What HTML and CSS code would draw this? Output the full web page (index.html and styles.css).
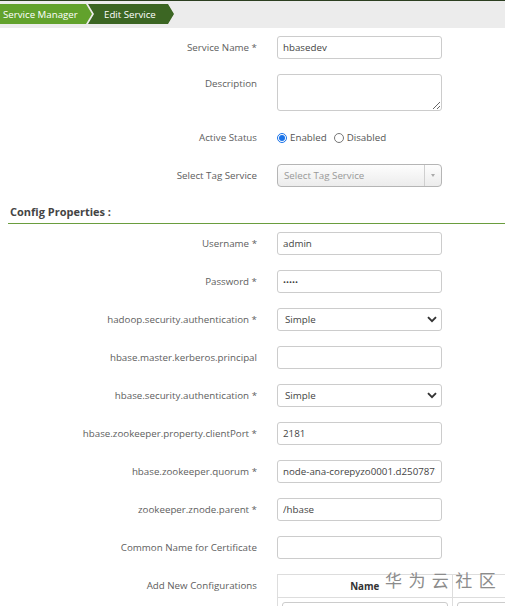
FILE: index.html
```html
<!DOCTYPE html>
<html lang="en">
<head>
<meta charset="utf-8">
<title>Edit Service</title>
<link rel="stylesheet" href="styles.css">
</head>
<body>
<div class="topbar">
  <a class="crumb crumb-first">Service Manager</a>
  <a class="crumb crumb-last">Edit Service</a>
</div>

<form class="form">
  <div class="row">
    <label class="lbl">Service Name *</label>
    <input class="field" type="text" value="hbasedev">
  </div>
  <div class="row">
    <label class="lbl lbl-area">Description</label>
    <textarea class="field area"></textarea>
  </div>
  <div class="row">
    <label class="lbl">Active Status</label>
    <div class="radios">
      <span class="radio-opt"><input type="radio" name="st" checked> Enabled</span>
      <span class="radio-opt"><input type="radio" name="st"> Disabled</span>
    </div>
  </div>
  <div class="row">
    <label class="lbl">Select Tag Service</label>
    <div class="select2">
      <span class="s2-text">Select Tag Service</span>
      <span class="s2-arrow"><span class="s2-tri"></span></span>
    </div>
  </div>

  <h3 class="section">Config Properties :</h3>

  <div class="row">
    <label class="lbl">Username *</label>
    <input class="field" type="text" value="admin">
  </div>
  <div class="row">
    <label class="lbl">Password *</label>
    <input class="field pw" type="password" value="admin">
  </div>
  <div class="row">
    <label class="lbl">hadoop.security.authentication *</label>
    <div class="select">
      <span>Simple</span>
      <svg width="10" height="7" viewBox="0 0 10 7"><path d="M1 1.2 L5 5.2 L9 1.2" fill="none" stroke="#333" stroke-width="1.9"/></svg>
    </div>
  </div>
  <div class="row">
    <label class="lbl">hbase.master.kerberos.principal</label>
    <input class="field" type="text" value="">
  </div>
  <div class="row">
    <label class="lbl">hbase.security.authentication *</label>
    <div class="select">
      <span>Simple</span>
      <svg width="10" height="7" viewBox="0 0 10 7"><path d="M1 1.2 L5 5.2 L9 1.2" fill="none" stroke="#333" stroke-width="1.9"/></svg>
    </div>
  </div>
  <div class="row">
    <label class="lbl">hbase.zookeeper.property.clientPort *</label>
    <input class="field" type="text" value="2181">
  </div>
  <div class="row">
    <label class="lbl">hbase.zookeeper.quorum *</label>
    <input class="field" type="text" value="node-ana-corepyzo0001.d2507871">
  </div>
  <div class="row">
    <label class="lbl">zookeeper.znode.parent *</label>
    <input class="field" type="text" value="/hbase">
  </div>
  <div class="row">
    <label class="lbl">Common Name for Certificate</label>
    <input class="field" type="text" value="">
  </div>
  <div class="row">
    <label class="lbl">Add New Configurations</label>
    <table class="cfg">
      <tr><th>Name</th><th>Value</th></tr>
      <tr><td><input class="cell-in" type="text"></td><td><input class="cell-in" type="text"></td></tr>
    </table>
  </div>
</form>

<div class="watermark">华 为 云 社 区</div>
</body>
</html>
```

FILE: styles.css
```css
html, body {
  margin: 0;
  padding: 0;
  overflow: hidden;
}
body {
  font-family: "Open Sans", "Noto Sans", sans-serif;
  font-size: 9.75px;
  color: #606060;
  background: #fff;
  width: 505px;
  height: 606px;
  position: relative;
}

/* breadcrumb bar */
.topbar {
  border-top: 1px solid #2c3f20;
  background: #ececec;
  padding: 3px 0 4px;
  display: flex;
  height: 20px;
}
.crumb {
  display: flex;
  align-items: center;
  height: 20px;
  color: #fff;
  font-size: 9.7px;
  text-decoration: none;
  box-sizing: border-box;
}
.crumb-first {
  width: 92px;
  padding-left: 3px;
  background: #62a22c;
  clip-path: polygon(0 0, 86px 0, 92px 50%, 86px 100%, 0 100%);
}
.crumb-last {
  width: 86px;
  margin-left: -4px;
  padding-left: 16px;
  background: #3c6623;
  clip-path: polygon(0 0, 80px 0, 86px 50%, 80px 100%, 0 100%, 6px 50%);
}

/* form */
.form {
  padding-top: 8px;
  margin: 0;
}
.row {
  display: grid;
  grid-template-columns: 257px 165px;
  column-gap: 20px;
  align-items: start;
  margin-bottom: 15px;
}
.lbl {
  text-align: right;
  line-height: 23px;
  white-space: nowrap;
  color: #606060;
}
.lbl-area {
  line-height: 20px;
}
.field {
  box-sizing: border-box;
  width: 165px;
  height: 23px;
  border: 1px solid #ccc;
  border-radius: 3px;
  padding: 0 5px;
  font-family: inherit;
  font-size: 9.75px;
  color: #444;
  background: #fff;
  margin: 0;
  outline: none;
}
.area {
  height: 37px;
  resize: vertical;
}
.pw {
  font-size: 8px;
}

.radios {
  display: flex;
  align-items: center;
  height: 23px;
  gap: 7px;
  color: #555;
}
.radio-opt {
  display: flex;
  align-items: center;
  gap: 3px;
}
.radio-opt input {
  width: 10px;
  height: 10px;
  margin: 0;
  accent-color: #1a73e8;
}

.select2 {
  box-sizing: border-box;
  width: 165px;
  height: 23px;
  border: 1px solid #b5b5b5;
  border-radius: 4px;
  background: linear-gradient(#fdfdfd, #ececec);
  display: flex;
  align-items: center;
}
.s2-text {
  flex: 1;
  padding-left: 6px;
  color: #999;
}
.s2-arrow {
  width: 16px;
  height: 100%;
  border-left: 1px solid #cfcfcf;
  display: flex;
  align-items: center;
  justify-content: center;
}
.s2-tri {
  width: 0;
  height: 0;
  border-left: 2.5px solid transparent;
  border-right: 2.5px solid transparent;
  border-top: 3px solid #aaa;
}

.select {
  box-sizing: border-box;
  width: 165px;
  height: 23px;
  border: 1px solid #ccc;
  border-radius: 3px;
  padding: 0 4px 0 7px;
  display: flex;
  align-items: center;
  justify-content: space-between;
  color: #444;
}

.section {
  margin: 17px 0 8px 8px;
  padding: 0 0 3px 2px;
  font-size: 11px;
  line-height: 16px;
  font-weight: 700;
  color: #444;
  border-bottom: 1px solid #6a9d3e;
}

/* add config table */
.cfg {
  width: 350px;
  border-collapse: collapse;
  table-layout: fixed;
}
.cfg th {
  height: 22px;
  border: 1px solid #ddd;
  font-size: 9.75px;
  font-weight: 700;
  color: #333;
  text-align: center;
  padding: 0;
}
.cfg td {
  border: 1px solid #ddd;
  padding: 4px;
}
.cell-in {
  box-sizing: border-box;
  width: 100%;
  height: 23px;
  border: 1px solid #ccc;
  border-radius: 3px;
  margin: 0;
}

.watermark {
  position: absolute;
  left: 385px;
  top: 567px;
  font-family: "Noto Sans CJK SC", sans-serif;
  font-size: 17px;
  letter-spacing: 1.3px;
  color: #8c8c8c;
  white-space: nowrap;
}
```
